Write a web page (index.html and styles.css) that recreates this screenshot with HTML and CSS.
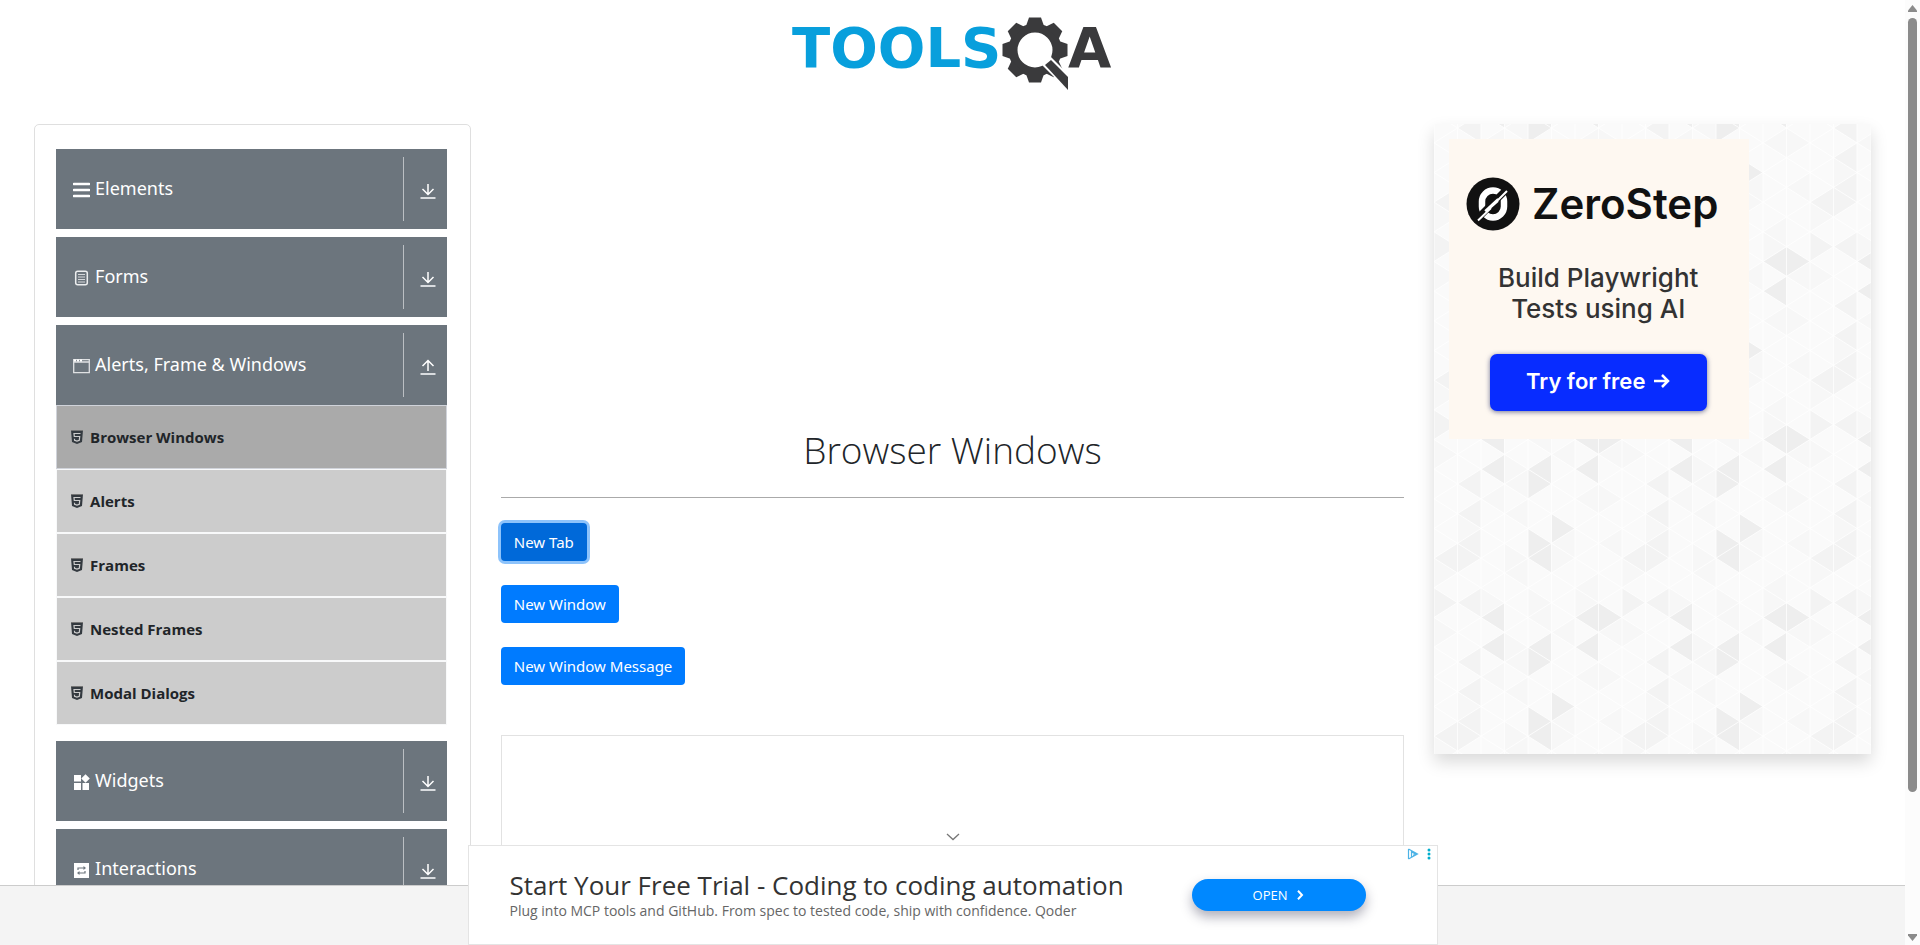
FILE: index.html
```html
<!DOCTYPE html>
<html lang="en">
<head>
<meta charset="utf-8">
<title>DEMOQA</title>
<link rel="stylesheet" href="styles.css">
</head>
<body>
<svg class="defs" aria-hidden="true">
  <symbol id="down" viewBox="0 0 16 16"><path d="M8 1v10.500M2.500 6L8 11.500 13.500 6" fill="none" stroke="#fff" stroke-width="1.500"/><path d="M.5 15h15" stroke="#d9dcdf" stroke-width="2"/></symbol>
  <symbol id="up" viewBox="0 0 16 16"><path d="M8 12V1.500M2.500 7L8 1.500 13.500 7" fill="none" stroke="#fff" stroke-width="1.500"/><path d="M.5 15h15" stroke="#d9dcdf" stroke-width="2"/></symbol>
  <symbol id="html5" viewBox="0 0 12 14"><path d="M0 0h12l-1 12-5 2-5-2z" fill="#343a40"/><path d="M0 0h12v1H0z" fill="#777"/><path d="M9.500 3.500H3l.3 3h5.400l-.4 3.700L6 11l-2.400-.8-.1-1.400" fill="none" stroke="#ccc" stroke-width="1.200"/></symbol>
</svg>
<div class="page">
  <header class="header">
    <a class="logo" href="#" aria-label="Tools QA">
      <svg viewBox="-2 0 350 110" width="350" height="110">
        <text x="12" y="67" class="logo-blue">TOOLS</text>
        <g transform="translate(255 50)" fill="#3a3a3c">
          <circle r="22" fill="none" stroke="#3a3a3c" stroke-width="9"/>
          <g id="teeth"><path id="tooth" d="M-9-24l3-8.500h12l3 8.500z"/>
          <use href="#tooth" transform="rotate(45)"/><use href="#tooth" transform="rotate(90)"/><use href="#tooth" transform="rotate(135)"/><use href="#tooth" transform="rotate(180)"/><use href="#tooth" transform="rotate(225)"/><use href="#tooth" transform="rotate(270)"/><use href="#tooth" transform="rotate(315)"/></g>
          <path d="M6 14l9-8 22 22v17z" fill="#fff"/>
          <path d="M10 15l6-5 17 17v13z"/>
        </g>
        <text x="288" y="67" class="logo-dark">A</text>
      </svg>
    </a>
  </header>
  <div class="columns">
    <aside class="sidebar">
      <nav class="menu">
        <button class="group" type="button">
          <svg class="icon" viewBox="0 0 17 16"><path d="M1 2h15M1 8h15M1 14h15" stroke="#fff" stroke-width="2.600" stroke-linecap="round"/></svg>
          <span class="label">Elements</span><span class="toggle"><svg><use href="#down"/></svg></span>
        </button>
        <button class="group" type="button">
          <svg class="icon" viewBox="0 0 17 16"><rect x="2.700" y="1.200" width="11.600" height="13.600" rx="2" fill="none" stroke="#eceeef" stroke-width="1.500"/><path d="M5 4.500h7M5 7h7M5 9.500h7M5 12h7" stroke="#d5d8db"/></svg>
          <span class="label">Forms</span><span class="toggle"><svg><use href="#down"/></svg></span>
        </button>
        <div class="open-group">
          <button class="group" type="button" aria-expanded="true">
            <svg class="icon" viewBox="0 0 17 16"><path d="M.7 1.700h15.600v13H.7zM.7 4h15.600" fill="none" stroke="#dfe1e3" stroke-width="1.300"/><path d="M1 2.500h8" stroke="#fff" stroke-width="2" stroke-dasharray="2 1"/></svg>
            <span class="label">Alerts, Frame &amp; Windows</span><span class="toggle"><svg><use href="#up"/></svg></span>
          </button>
          <ul class="items">
            <li class="item active"><svg><use href="#html5"/></svg><span>Browser Windows</span></li>
            <li class="item"><svg><use href="#html5"/></svg><span>Alerts</span></li>
            <li class="item"><svg><use href="#html5"/></svg><span>Frames</span></li>
            <li class="item"><svg><use href="#html5"/></svg><span>Nested Frames</span></li>
            <li class="item"><svg><use href="#html5"/></svg><span>Modal Dialogs</span></li>
          </ul>
        </div>
        <button class="group" type="button">
          <svg class="icon" viewBox="0 0 17 16" fill="#fff"><path d="M1 1h7v6.500H1zM1 9h7v7H1zM9.500 9h6.500v7H9.500zM12.500.2l4.300 4.200-4.300 4.300-4.200-4.300z"/></svg>
          <span class="label">Widgets</span><span class="toggle"><svg><use href="#down"/></svg></span>
        </button>
        <button class="group" type="button">
          <svg class="icon" viewBox="0 0 17 16"><path d="M1 1h15v15H1z" fill="#fff"/><path d="M5 8V6h6M12 9v2H6" fill="none" stroke="#6c757d" stroke-width="1.200"/><path d="M10.500 4l2.500 2-2.500 2zM6.500 9L4 11l2.500 2z" fill="#6c757d"/></svg>
          <span class="label">Interactions</span><span class="toggle"><svg><use href="#down"/></svg></span>
        </button>
      </nav>
    </aside>
    <main class="main">
      <h1 class="title">Browser Windows</h1>
      <div class="actions">
        <button class="btn focused" type="button">New Tab</button>
        <button class="btn" type="button">New Window</button>
        <button class="btn" type="button">New Window Message</button>
      </div>
      <div class="frame"></div>
    </main>
    <aside class="promo">
      <svg class="pattern" width="100%" height="100%" aria-hidden="true">
        <defs>
          <g id="tris">
            <path fill="#f7f7f7" d="M3 2l1-1v2zM2 1l1-1v2zM1 6l-1-1v2zM4 5l-1-1v2zM7 4l1-1v2zM5 8l-1-1v2zM5 4l1-1v2zM3 8l-1-1v2zM1 10l-1-1v2zM6 7l1-1v2zM7 10l1-1v2zM2 3l-1-1v2zM3 0l1-1v2zM5 0l-1-1v2zM8 1l-1-1v2zM6 5l-1-1v2zM4 9l1-1v2zM5 10l1-1v2zM4 11l-1-1v2zM6 1l1-1v2zM3 6l1-1v2zM7 8l-1-1v2z"/>
            <path fill="#f3f3f3" d="M1 0l1-1v2zM1 2l1-1v2zM1 4l1-1v2zM0 5l1-1v2zM2 5l-1-1v2zM1 8l-1-1v2zM1 8l1-1v2z"/>
            <path fill="#eee" d="M5 0l-1-1v2zM2 11l1-1v2zM4 11l1-1v2zM6 11l1-1v2zM6 3l-1-1v2zM5 4l-1-1v2zM4 5l1-1v2zM2 9l1-1v2zM6 9l1-1v2zM8 9l-1-1v2z"/>
          </g>
          <pattern id="tile" width="188" height="178" patternUnits="userSpaceOnUse">
            <rect width="188" height="178" fill="#fafafa"/>
            <g transform="translate(0 4) scale(23.500 14.833)">
              <use href="#tris"/><use href="#tris" y="-12"/><use href="#tris" y="12"/>
              <path class="mesh" d="M0-2v16M1-2v16M2-2v16M3-2v16M4-2v16M5-2v16M6-2v16M7-2v16M8-2v16M0-7l8 8M0-5l8 8M0-3l8 8M0-1l8 8M0 1l8 8M0 3l8 8M0 5l8 8M0 7l8 8M0 9l8 8M0 11l8 8M0 1l8-8M0 3l8-8M0 5l8-8M0 7l8-8M0 9l8-8M0 11l8-8M0 13l8-8M0 15l8-8M0 17l8-8M0 19l8-8"/>
            </g>
          </pattern>
        </defs>
        <rect width="100%" height="100%" fill="url(#tile)"/>
      </svg>
      <section class="zero">
        <div class="zero-brand">
          <svg width="54" height="54" viewBox="0 0 54 54"><circle cx="27" cy="27" r="26.500" fill="#111"/><rect x="16" y="13.500" width="22" height="27" rx="11" fill="none" stroke="#fff" stroke-width="6.500"/><path d="M10 43L43 10" stroke="#111" stroke-width="7"/><path d="M12 43.500L25 31M29 26l12-12M19 34l13-12M24 31l8-7" stroke="#fff" stroke-width="2"/></svg>
          <span>ZeroStep</span>
        </div>
        <p class="zero-text">Build Playwright<br>Tests using AI</p>
        <button class="zero-btn" type="button">Try for free
          <svg width="17" height="16" viewBox="0 0 17 16"><path d="M1 8h14M9 2l6 6-6 6" fill="none" stroke="#fff" stroke-width="2.500"/></svg>
        </button>
      </section>
    </aside>
  </div>
</div>
<footer class="footer"></footer>
<div class="banner-wrap">
  <button class="collapse" type="button" aria-label="Collapse"><svg width="14" height="8" viewBox="0 0 14 8"><path d="M1 1l6 5.500L13 1" fill="none" stroke="#777" stroke-width="1.300"/></svg></button>
  <section class="banner">
    <div class="banner-text"><p class="banner-title">Start Your Free Trial - Coding to coding automation</p><p class="banner-sub">Plug into MCP tools and GitHub. From spec to tested code, ship with confidence. Qoder</p></div>
    <a class="open" href="#">OPEN <svg width="7" height="10" viewBox="0 0 7 10"><path d="M1 .7L5 5 1 9.300" fill="none" stroke="#fff" stroke-width="2"/></svg></a>
    <svg class="choices" width="24" height="12" viewBox="0 0 24 12"><path d="M1.500 1v10M1.500 1l9 5-9 5M4.500 9V4l4 2-2.500 1.500" fill="none" stroke="#4db3e6" stroke-width="1.200"/><g fill="#00aecd"><circle cx="22" cy="2" r="1.500"/><circle cx="22" cy="6" r="1.500"/><circle cx="22" cy="10" r="1.500"/></g></svg>
  </section>
</div>
<div class="scrollbar" aria-hidden="true">
  <svg width="9" height="7" viewBox="0 0 9 7"><path d="M4.500 0L9 5.500V7H0V5.500z" fill="#8b8b8b"/></svg>
  <div class="track"><div class="thumb"></div></div>
  <svg width="9" height="7" viewBox="0 0 9 7"><path d="M4.500 7L9 1.500V0H0v1.500z" fill="#8b8b8b"/></svg>
</div>
</body>
</html>
```
FILE: styles.css
```css
*, *::before, *::after { box-sizing: border-box; }
html { height: 100%; }
body {
  position: relative;
  height: 100%;
  margin: 0;
  overflow: hidden;
  background: #fff;
  color: #212529;
  font: 16px/24px "Noto Sans", "Open Sans", sans-serif;
}
button { margin: 0; border: 0; font: inherit; cursor: pointer; }
p, h1, ul { margin: 0; padding: 0; }
.defs { position: absolute; width: 0; height: 0; }
.page { padding-right: 15px; }

.header { display: flex; justify-content: center; padding-bottom: 14px; }
.logo { display: block; height: 110px; }
.logo text { font: 700 56px "DejaVu Sans", sans-serif; }
.logo-blue { fill: #089fdc; }
.logo-dark { fill: #3a3a3c; }

.columns {
  display: grid;
  grid-template-columns: 1fr 2fr 1fr;
  align-items: start;
  padding: 0 1%;
}

.sidebar { margin: 0 15px; padding: 24px 23px 80px 21px; border: 1px solid #dfdfdf; border-radius: 5px; }
.menu { display: flex; flex-direction: column; gap: 8px; }
.group {
  display: flex;
  align-items: center;
  gap: 5px;
  width: 100%;
  height: 80px;
  padding: 0 11px 0 17px;
  background: #6c757d;
  color: #fff;
  font-size: 18px;
  text-align: left;
}
.icon { flex: none; width: 17px; height: 16px; margin-top: 2px; }
.label { flex: 1; padding-bottom: 2px; }
.toggle {
  display: flex;
  align-items: center;
  height: 64px;
  padding-left: 16px;
  border-left: 1px solid #bbbfc3;
}
.toggle svg { width: 16px; height: 16px; margin-top: 4px; }
.items { margin-bottom: 8px; list-style: none; }
.item {
  display: flex;
  align-items: center;
  gap: 7px;
  height: 64px;
  padding: 0 14px;
  border: 1px solid #f8f9fa;
  background: #ccc;
  font-size: 15px;
  font-weight: 700;
  font-family: "Open Sans", "Noto Sans", sans-serif;
}
.item svg { width: 12px; height: 14px; }
.item.active { border-color: #d0d3da; background: #aaa; }

.main { min-width: 0; padding: 300px 15px 0; }
.title {
  padding-bottom: 21px;
  border-bottom: 1px solid #aaa;
  font-family: "Open Sans", "Noto Sans", sans-serif;
  font-size: 37px;
  font-weight: 300;
  line-height: 52px;
  text-align: center;
}
.actions { display: flex; flex-direction: column; align-items: flex-start; gap: 24px; padding: 25px 0 50px; }
.btn {
  height: 38px;
  padding: 0 13px;
  border-radius: 4px;
  background: #007bff;
  color: #fff;
  font-size: 15px;
}
.btn.focused { background: #0069d9; box-shadow: 0 0 0 3px #8dc3fb; }
.frame { height: 250px; border: 1px solid #e2e2e2; }

.promo {
  position: relative;
  min-height: 630px;
  margin: 0 15px;
  padding: 15px;
  box-shadow: 0 8px 16px rgba(0, 0, 0, .15);
}
.pattern { position: absolute; inset: 0; }
.mesh { fill: none; stroke: #fff; stroke-width: 1px; stroke-opacity: .8; vector-effect: non-scaling-stroke; }
.zero {
  position: relative;
  display: flex;
  flex-direction: column;
  align-items: center;
  width: 300px;
  height: 300px;
  padding: 38px 2px 0 0;
  background: #fef8f1;
  font-family: Inter, sans-serif;
}
.zero-brand { display: flex; align-items: center; gap: 12px; padding-right: 12px; color: #111; font-size: 42px; font-weight: 600; line-height: 54px; }
.zero-text { padding: 31px 0 30px; color: #333; font-size: 26px; font-weight: 500; line-height: 31px; text-align: center; }
.zero-btn {
  display: flex;
  align-items: center;
  justify-content: center;
  gap: 8px;
  width: 217px;
  height: 57px;
  padding-bottom: 4px;
  border-radius: 7px;
  background: #082cff;
  color: #fff;
  font-size: 22px;
  font-weight: 600;
  box-shadow: 0 1px 5px rgba(20, 30, 90, .6);
}

.footer { position: absolute; right: 15px; bottom: 0; left: 0; height: 60px; border-top: 1px solid #ccc; background: #f4f4f4; }

.banner-wrap { position: absolute; right: 15px; bottom: 0; left: 0; display: flex; flex-direction: column; align-items: center; }
.collapse { display: flex; padding: 4px 8px; background: none; }
.banner {
  position: relative;
  display: flex;
  align-items: center;
  justify-content: space-between;
  width: 970px;
  height: 100px;
  padding: 0 71px 0 41px;
  border: 1px solid #e4e4e4;
  background: #fff;
  font-family: "Open Sans", "Noto Sans", sans-serif;
}
.banner-title { color: #333; font-size: 26px; line-height: 32px; }
.banner-sub { color: #666; font-size: 14px; line-height: 20px; }
.open {
  display: flex;
  align-items: center;
  justify-content: center;
  gap: 10px;
  width: 174px;
  height: 32px;
  border-radius: 16px;
  background: #08f;
  color: #fff;
  font-size: 13px;
  text-decoration: none;
  box-shadow: 0 6px 12px rgba(30, 30, 60, .35);
}
.choices { position: absolute; top: 2px; right: 6px; }

.scrollbar {
  position: absolute;
  top: 0;
  right: 0;
  bottom: 0;
  display: flex;
  flex-direction: column;
  align-items: center;
  gap: 6px;
  width: 15px;
  padding: 5px 0 4px;
  background: #fcfcfc;
}
.track { flex: 1; width: 9px; }
.thumb { height: 85%; border-radius: 5px; background: #8b8b8b; }
```
